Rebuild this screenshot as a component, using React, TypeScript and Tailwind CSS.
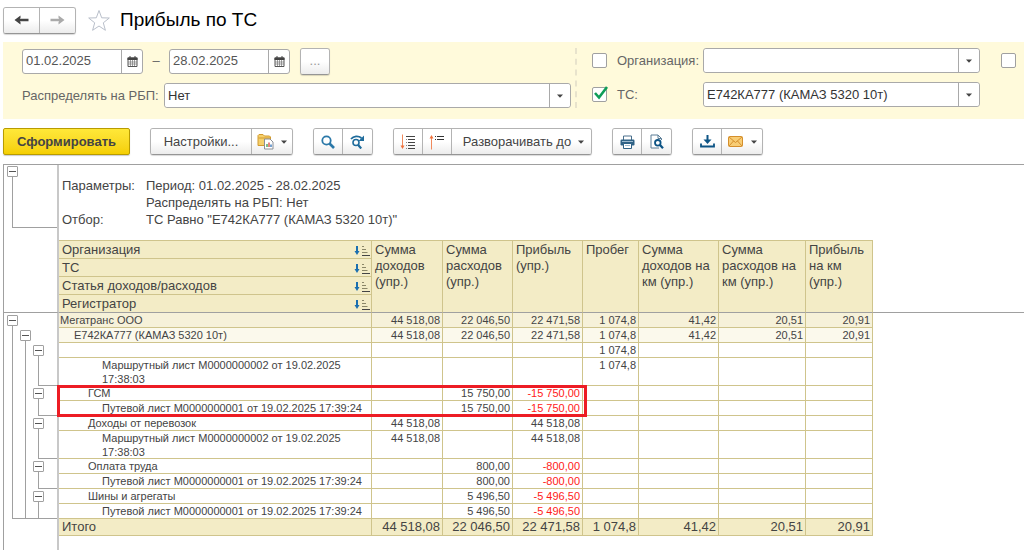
import React, { useState } from 'react';
import clsx from 'clsx';

type GutterMark = 'toggle' | 'line' | 'end' | null;

interface ReportRow {
  label: string;
  level: number;
  gutter: GutterMark[];
  values: string[];
  tall?: boolean;
  tone?: string;
  framed?: boolean;
}

const ROWS: ReportRow[] = [
  { label: 'Мегатранс ООО', level: 0, gutter: ['toggle', null, null], values: ['44 518,08', '22 046,50', '22 471,58', '1 074,8', '41,42', '20,51', '20,91'], tone: 'bg-[#f6f1d9]' },
  { label: 'Е742КА777 (КАМАЗ 5320 10т)', level: 1, gutter: ['line', 'toggle', null], values: ['44 518,08', '22 046,50', '22 471,58', '1 074,8', '41,42', '20,51', '20,91'], tone: 'bg-[#fbf9ec]' },
  { label: '', level: 2, gutter: ['line', 'line', 'toggle'], values: ['', '', '', '1 074,8', '', '', ''] },
  { label: 'Маршрутный лист М0000000002 от 19.02.2025 17:38:03', level: 3, gutter: ['line', 'line', 'end'], values: ['', '', '', '1 074,8', '', '', ''], tall: true },
  { label: 'ГСМ', level: 2, gutter: ['line', 'line', 'toggle'], values: ['', '15 750,00', '-15 750,00', '', '', '', ''], framed: true },
  { label: 'Путевой лист М0000000001 от 19.02.2025 17:39:24', level: 3, gutter: ['line', 'line', 'end'], values: ['', '15 750,00', '-15 750,00', '', '', '', ''] },
  { label: 'Доходы от перевозок', level: 2, gutter: ['line', 'line', 'toggle'], values: ['44 518,08', '', '44 518,08', '', '', '', ''] },
  { label: 'Маршрутный лист М0000000002 от 19.02.2025 17:38:03', level: 3, gutter: ['line', 'line', 'end'], values: ['44 518,08', '', '44 518,08', '', '', '', ''], tall: true },
  { label: 'Оплата труда', level: 2, gutter: ['line', 'line', 'toggle'], values: ['', '800,00', '-800,00', '', '', '', ''] },
  { label: 'Путевой лист М0000000001 от 19.02.2025 17:39:24', level: 3, gutter: ['line', 'line', 'end'], values: ['', '800,00', '-800,00', '', '', '', ''] },
  { label: 'Шины и агрегаты', level: 2, gutter: ['line', 'line', 'toggle'], values: ['', '5 496,50', '-5 496,50', '', '', '', ''] },
  { label: 'Путевой лист М0000000001 от 19.02.2025 17:39:24', level: 3, gutter: ['end', 'end', 'end'], values: ['', '5 496,50', '-5 496,50', '', '', '', ''] },
];

const TOTALS = ['44 518,08', '22 046,50', '22 471,58', '1 074,8', '41,42', '20,51', '20,91'];

const GROUPS = ['Организация', 'ТС', 'Статья доходов/расходов', 'Регистратор'];

const COLUMNS = [
  'Сумма доходов (упр.)',
  'Сумма расходов (упр.)',
  'Прибыль (упр.)',
  'Пробег',
  'Сумма доходов на км (упр.)',
  'Сумма расходов на км (упр.)',
  'Прибыль на км (упр.)',
];

const INDENTS = ['pl-px', 'pl-[15px]', 'pl-[29px]', 'pl-[43px]'];

const FIELD = 'flex h-[25px] items-stretch rounded-[3px] border border-[#a9a9a9] bg-white';
const BUTTON = 'flex items-center justify-center bg-linear-to-b from-white via-white to-[#ececec] text-[#444]';
const GROUP = 'flex h-[27px] shrink-0 items-stretch divide-x divide-[#b3b3b3] overflow-hidden rounded-[3px] border border-[#b3b3b3] border-b-[#959595] shadow-[0_1px_1px_rgba(0,0,0,0.15)]';

const Caret = () => (
  <svg width="6" height="4" viewBox="0 0 6 4" className="shrink-0">
    <path d="M0 0.500h6L3 3.700z" fill="#444" />
  </svg>
);

const CalendarIcon = () => (
  <svg width="11" height="11" viewBox="0 0 11 11">
    <path d="M1 2h9v8.5H1z" fill="#fff" stroke="#555" />
    <path d="M0.5 1.5h10v2.5H0.5z" fill="#444" />
    <path d="M3 0v2M8 0v2" stroke="#444" />
    <path d="M3.5 4v6M5.5 4v6M7.5 4v6M1 6h9M1 8h9" stroke="#777" strokeWidth="0.7" />
  </svg>
);

const Arrow = ({ flip, color }: { flip?: boolean; color: string }) => (
  <svg width="15" height="10" viewBox="0 0 15 10">
    <path d={flip ? 'M0.500 5h10' : 'M14.500 5H4'} stroke={color} strokeWidth="2.400" />
    <path d={flip ? 'M8.500 0.500L14.500 5l-6 4.500V7l1.500-2-1.500-2z' : 'M6.500 0.500L0.500 5l6 4.500V7L5 5l1.500-2z'} fill={color} />
  </svg>
);

const StarIcon = () => (
  <svg width="24" height="23" viewBox="0 0 24 23">
    <path
      d="M12 1.5l2.7 7.3 7.6.2-6 4.8 2.1 7.5L12 17l-6.4 4.3 2.1-7.5-6-4.8 7.6-.2z"
      fill="#fff"
      stroke="#b9bfca"
    />
  </svg>
);

const FolderReportIcon = () => (
  <svg width="18" height="17" viewBox="0 0 18 17">
    <path d="M1 12.5V2.5l1-1h4l1.5 1.5h5l1 1v8.5z" fill="#f5d06c" stroke="#d29a2e" />
    <path d="M1.5 5h12" stroke="#d29a2e" />
    <path d="M7.5 6h5.5l3 3v7H7.5z" fill="#fff" stroke="#8a8f96" />
    <path d="M10 14v-3" stroke="#3a9d48" strokeWidth="1.3" />
    <path d="M12 14v-4.5" stroke="#d8433a" strokeWidth="1.3" />
    <path d="M14 14v-2.5" stroke="#2c6fb5" strokeWidth="1.3" />
  </svg>
);

const SearchIcon = () => (
  <svg width="14" height="14" viewBox="0 0 14 14" fill="none" stroke="#2b78a8">
    <circle cx="5.5" cy="5.5" r="4.2" strokeWidth="1.8" />
    <path d="M8.5 8.5l4.500 4.500" strokeWidth="2.6" />
  </svg>
);

const SearchNextIcon = () => (
  <svg width="15" height="14" viewBox="0 0 15 14" fill="none" stroke="#1f6c9c">
    <path d="M1 4C3.5 0.800 8.500 0.600 11.500 3" strokeWidth="1.8" />
    <path d="M14 0.500v5.500H8.500z" fill="#1f6c9c" stroke="none" />
    <circle cx="6" cy="7.500" r="3" strokeWidth="1.600" />
    <path d="M8.200 10l3 3.500" strokeWidth="2.200" />
  </svg>
);

const ExpandIcon = () => (
  <svg width="16" height="16" viewBox="0 0 16 16">
    <path d="M2.5 0.5v12" stroke="#f08a5d" />
    <path d="M0.500 11.500h4L2.500 15z" fill="#f0703a" />
    <path d="M6 2.5h9M8 5.5h7M8 8.500h7M8 11.500h7M8 14.500h7" stroke="#444" />
    <path d="M6 5.500h1M6 8.500h1M6 11.500h1M6 14.500h1" stroke="#888" />
  </svg>
);

const CollapseIcon = () => (
  <svg width="16" height="16" viewBox="0 0 16 16">
    <path d="M2.5 3.5v12" stroke="#f08a5d" />
    <path d="M0.500 4.500h4L2.500 1z" fill="#f0703a" />
    <path d="M6 2.5h1M8 2.5h7M6 5.5h1M8 5.5h7" stroke="#333" />
  </svg>
);

const PrintIcon = () => (
  <svg width="15" height="14" viewBox="0 0 15 14">
    <path d="M3.5 5V1h8v4" fill="#fff" stroke="#4a6f8c" />
    <rect x="0.5" y="4.5" width="14" height="6" rx="1.2" fill="#2f6286" />
    <path d="M2 6.5h11" stroke="#9dbbd0" />
    <path d="M3.5 8.5h8v5h-8z" fill="#fff" stroke="#2f6286" />
    <path d="M5 10.5h5" stroke="#9dbbd0" />
  </svg>
);

const PreviewIcon = () => (
  <svg width="14" height="15" viewBox="0 0 14 15" fill="none">
    <path d="M9 14H1V1h7l3.5 3.5V6" fill="#fff" stroke="#5b7d96" />
    <path d="M8 1v3.5h3.5" stroke="#5b7d96" />
    <circle cx="7.8" cy="8.8" r="2.8" stroke="#0d5485" strokeWidth="1.8" />
    <path d="M9.8 10.8l3.2 3.4" stroke="#0d5485" strokeWidth="2.3" />
  </svg>
);

const SaveIcon = () => (
  <svg width="15" height="13" viewBox="0 0 15 13">
    <path d="M7.5 0v6" stroke="#0d5485" strokeWidth="2" />
    <path d="M3.5 4.5h8l-4 4.5z" fill="#0d5485" />
    <path d="M1 8.5v3h13v-3" fill="none" stroke="#0d5485" strokeWidth="1.8" />
  </svg>
);

const MailIcon = () => (
  <svg width="15" height="11" viewBox="0 0 15 11">
    <rect x="0.5" y="0.5" width="14" height="10" rx="1" fill="#f8cd75" stroke="#d58f2c" />
    <path d="M1 1l6.5 5.5L14 1M1 10l4.5-5M14 10L9.5 5" fill="none" stroke="#d58f2c" />
  </svg>
);

const SortIcon = () => (
  <svg width="16" height="12" viewBox="0 0 16 12" className="shrink-0">
    <path d="M3 2v6" stroke="#1a6fb0" strokeWidth="2" />
    <path d="M0.500 7h5L3 11z" fill="#1a6fb0" />
    <path d="M8 2.500h2M8 5.500h4M8 8.500h5.500" stroke="#8b8768" />
    <path d="M8 11.500h8" stroke="#444" />
  </svg>
);

const Toggle = () => {
  const [open, setOpen] = useState(true);
  return (
    <button
      type="button"
      aria-label="Свернуть группу"
      aria-expanded={open}
      onClick={() => setOpen(!open)}
      className="flex size-[11px] shrink-0 items-center justify-center rounded-[1px] border border-[#a0a0a0] bg-white"
    >
      <span className="h-px w-[7px] bg-[#555]" />
    </button>
  );
};

// Tree lines beside one row: a column per nesting level
const Gutter = ({ marks }: { marks: GutterMark[] }) => {
  const firstEnd = marks.indexOf('end');
  return (
    <div className="flex h-full pl-[2px]">
      {marks.map((mark, i) => (
        <div key={i} className="flex w-[13px] flex-col items-center">
          {mark === 'toggle' && (
            <>
              <span className="h-[2px]" />
              <Toggle />
              <span className="w-px flex-1 bg-[#a0a0a0]" />
            </>
          )}
          {(mark === 'line' || mark === 'end') && <span className="w-px flex-1 bg-[#a0a0a0]" />}
          {firstEnd >= 0 && i >= firstEnd && (
            <span className={clsx('h-px bg-[#a0a0a0]', i === firstEnd ? 'w-[7px] self-end' : 'w-full')} />
          )}
        </div>
      ))}
      {firstEnd >= 0 && <span className="h-px flex-1 self-end bg-[#a0a0a0]" />}
    </div>
  );
};

const DateField = ({ label, value }: { label: string; value: string }) => (
  <div className={clsx(FIELD, 'w-[121px]')}>
    <input type="text" aria-label={label} defaultValue={value} className="min-w-0 flex-1 rounded-[3px] pl-[3px] text-[#555] outline-none" />
    <button type="button" aria-label="Выбрать дату" className="flex w-[21px] items-center justify-center border-l border-[#a9a9a9]">
      <CalendarIcon />
    </button>
  </div>
);

const SelectField = ({ id, value, className }: { id: string; value: string; className: string }) => (
  <div className={clsx(FIELD, 'relative', className)}>
    <select id={id} defaultValue={value} className="w-full appearance-none rounded-[3px] bg-white pr-6 pl-[3px] text-[#333] outline-none">
      <option value={value}>{value}</option>
    </select>
    <span className="pointer-events-none absolute inset-y-0 right-0 flex w-[21px] items-center justify-center border-l border-[#a9a9a9]">
      <Caret />
    </span>
  </div>
);

const CheckBox = ({ id, label, checked }: { id: string; label?: string; checked?: boolean }) => (
  <span className="relative flex size-[15px] shrink-0">
    <input
      id={id}
      type="checkbox"
      aria-label={label}
      defaultChecked={checked}
      className="peer size-[15px] appearance-none rounded-[2px] border border-[#a0a0a0] bg-white"
    />
    <svg viewBox="0 0 15 15" className="pointer-events-none absolute inset-0 hidden overflow-visible peer-checked:block">
      <path d="M3 6l4 4.5L15 0" fill="none" stroke="#0f9d58" strokeWidth="2.6" />
    </svg>
  </span>
);

const NUM_CELL = 'border-r border-b border-[#cfc48c] pr-[2px] text-right align-top whitespace-nowrap';

export default function App() {
  return (
    <div className="flex min-h-screen flex-col bg-white pl-[3px] font-['Liberation_Sans',Arial,sans-serif] text-[13px] text-[#444]">
      <header className="flex h-[42px] items-center pb-[2px]">
        <div className={clsx(GROUP, 'h-[25px] w-[73px]')}>
          <button type="button" aria-label="Назад" className={clsx(BUTTON, 'flex-1')}>
            <Arrow color="#444" />
          </button>
          <button type="button" aria-label="Вперед" className={clsx(BUTTON, 'flex-1')}>
            <Arrow flip color="#aaa" />
          </button>
        </div>
        <button type="button" aria-label="В избранное" className="ml-[11px]">
          <StarIcon />
        </button>
        <h1 className="ml-[9px] text-[19px] text-black">Прибыль по ТС</h1>
      </header>

      <section className="flex bg-[#fffadb] pt-[6px] pb-[11px] text-[#666]">
        <div className="flex min-w-0 flex-1 flex-col gap-[9px] pr-1 pl-[19px]">
          <div className="flex h-[26px] items-center">
            <DateField label="Начало периода" value="01.02.2025" />
            <span className="w-[26px] text-center">–</span>
            <DateField label="Конец периода" value="28.02.2025" />
            <div className={clsx(GROUP, 'ml-[10px] h-[26px] w-[30px]')}>
              <button type="button" className={clsx(BUTTON, 'flex-1 text-[#999]')}>...</button>
            </div>
          </div>
          <div className="flex items-center">
            <label htmlFor="spread" className="w-[142px] shrink-0 whitespace-nowrap">Распределять на РБП:</label>
            <SelectField id="spread" value="Нет" className="flex-1" />
          </div>
        </div>
        <div className="flex shrink-0 border-l-2 border-dashed border-[#e8e3cc] pr-2 pl-[15px]">
          <div className="flex flex-col gap-[9px]">
            <div className="flex h-[25px] items-center">
              <CheckBox id="use-org" label="Использовать отбор по организации" />
              <label htmlFor="org" className="ml-[10px] w-[86px]">Организация:</label>
              <SelectField id="org" value="" className="w-[277px]" />
            </div>
            <div className="flex h-[25px] items-center">
              <CheckBox id="use-ts" label="Использовать отбор по ТС" checked />
              <label htmlFor="ts" className="ml-[10px] w-[86px]">ТС:</label>
              <SelectField id="ts" value="Е742КА777 (КАМАЗ 5320 10т)" className="w-[277px]" />
            </div>
          </div>
          <div className="ml-[21px] flex h-[25px] items-center">
            <CheckBox id="use-more" label="Дополнительный отбор" />
          </div>
        </div>
      </section>

      <div className="flex gap-5 py-[9px]">
        <button
          type="button"
          className="h-[27px] w-[127px] rounded-[2px] border border-[#b89b00] bg-linear-to-b from-[#ffe838] to-[#f5cf00] font-bold text-[#444] shadow-[0_1px_1px_rgba(0,0,0,0.2)]"
        >
          Сформировать
        </button>
        <div className={GROUP}>
          <button type="button" className={clsx(BUTTON, 'w-[101px]')}>Настройки...</button>
          <button type="button" aria-label="Варианты отчета" className={clsx(BUTTON, 'w-10 gap-[6px]')}>
            <FolderReportIcon />
            <Caret />
          </button>
        </div>
        <div className={GROUP}>
          <button type="button" aria-label="Найти" className={clsx(BUTTON, 'w-[29px]')}><SearchIcon /></button>
          <button type="button" aria-label="Найти далее" className={clsx(BUTTON, 'w-[29px]')}><SearchNextIcon /></button>
        </div>
        <div className={GROUP}>
          <button type="button" aria-label="Развернуть группы" className={clsx(BUTTON, 'w-[29px]')}><ExpandIcon /></button>
          <button type="button" aria-label="Свернуть группы" className={clsx(BUTTON, 'w-[29px]')}><CollapseIcon /></button>
          <button type="button" className={clsx(BUTTON, 'w-[139px] gap-[7px] pl-1')}>
            Разворачивать до
            <Caret />
          </button>
        </div>
        <div className={GROUP}>
          <button type="button" aria-label="Печать" className={clsx(BUTTON, 'w-[29px]')}><PrintIcon /></button>
          <button type="button" aria-label="Предварительный просмотр" className={clsx(BUTTON, 'w-[29px]')}><PreviewIcon /></button>
        </div>
        <div className={GROUP}>
          <button type="button" aria-label="Сохранить" className={clsx(BUTTON, 'w-[29px]')}><SaveIcon /></button>
          <button type="button" aria-label="Отправить по почте" className={clsx(BUTTON, 'w-10 gap-2')}>
            <MailIcon />
            <Caret />
          </button>
        </div>
      </div>

      <main className="flex flex-1 flex-col border-t border-l border-[#a0a0a0]">
        <div className="flex">
          <div className="flex w-[55px] shrink-0 flex-col border-r-2 border-[#c8c8c8] pt-px pb-3 pl-[2px]">
            <div className="flex flex-1">
              <div className="flex w-[13px] flex-col items-center">
                <Toggle />
                <span className="w-px flex-1 bg-[#a0a0a0]" />
                <span className="h-px w-[7px] self-end bg-[#a0a0a0]" />
              </div>
              <span className="h-px flex-1 self-end bg-[#a0a0a0]" />
            </div>
          </div>
          <dl className="grid grid-cols-[84px_auto] py-3 pl-[3px] leading-[17px]">
            <dt>Параметры:</dt>
            <dd>Период: 01.02.2025 - 28.02.2025</dd>
            <dd className="col-start-2">Распределять на РБП: Нет</dd>
            <dt>Отбор:</dt>
            <dd>ТС Равно "Е742КА777 (КАМАЗ 5320 10т)"</dd>
          </dl>
        </div>

        <table className="w-full table-fixed border-separate border-spacing-0">
          <colgroup>
            <col className="w-[55px]" />
            <col className="w-[313px]" />
            <col className="w-[71px]" />
            <col className="w-[70px]" />
            <col className="w-[70px]" />
            <col className="w-[56px]" />
            <col className="w-[80px]" />
            <col className="w-[87px]" />
            <col className="w-[67px]" />
            <col />
          </colgroup>
          <thead>
            {GROUPS.map((group, i) => (
              <tr key={group} className={i === 0 ? 'h-[19px]' : 'h-[18px]'}>
                {i === 0 && <td rowSpan={4} className="border-r-2 border-b border-r-[#c8c8c8] border-b-[#a0a0a0]" />}
                <th
                  scope="col"
                  className={clsx(
                    'border-r border-b border-r-[#cfc48c] bg-[#f3ecc6] p-0 pl-[3px] text-left font-normal',
                    i === 0 && 'border-t border-t-[#cfc48c]',
                    i === 3 ? 'border-b-[#a0a0a0]' : 'border-b-[#cfc48c]',
                  )}
                >
                  <div className="flex items-center justify-between pr-px leading-[17px]">
                    {group}
                    <SortIcon />
                  </div>
                </th>
                {i === 0 &&
                  COLUMNS.map((column) => (
                    <th
                      key={column}
                      scope="col"
                      rowSpan={4}
                      className="border-t border-r border-b border-[#cfc48c] border-b-[#a0a0a0] bg-[#f3ecc6] p-0 pt-px pl-[3px] text-left align-top leading-[16px] font-normal"
                    >
                      {column}
                    </th>
                  ))}
                {i === 0 && <td rowSpan={4} className="border-b border-[#a0a0a0]" />}
              </tr>
            ))}
          </thead>
          <tbody className="text-[11px] leading-[14px]">
            {ROWS.map((row, i) => (
              <tr key={i} className={clsx(row.tall ? 'h-[28px]' : 'h-[15px]')}>
                <td className={clsx('border-r-2 border-[#c8c8c8] p-0', row.tall ? 'h-[28px]' : 'h-[15px]')}>
                  <Gutter marks={row.gutter} />
                </td>
                <td className={clsx('relative border-r border-b border-[#cfc48c] p-0 align-top', row.tone)}>
                  <div className={clsx('pr-5', INDENTS[row.level], row.tall ? 'h-[27px]' : 'h-[14px] whitespace-nowrap')}>
                    {row.label}
                  </div>
                  {row.framed && (
                    <div className="pointer-events-none absolute -top-px -left-[2px] z-10 h-8 w-[530px] border-3 border-[#ed1c24]" />
                  )}
                </td>
                {row.values.map((value, j) => (
                  <td key={j} className={clsx(NUM_CELL, 'py-0 pl-0', row.tone, value.startsWith('-') && 'text-[#ff1a1a]')}>
                    {value}
                  </td>
                ))}
                <td />
              </tr>
            ))}
          </tbody>
          <tfoot>
            <tr className="h-[17px] leading-[16px]">
              <td className="border-r-2 border-[#c8c8c8]" />
              <th scope="row" className="border-r border-b border-[#cfc48c] bg-[#f3ecc6] p-0 pl-[3px] text-left font-normal">Итого</th>
              {TOTALS.map((value, j) => (
                <td key={j} className={clsx(NUM_CELL, 'bg-[#f3ecc6] py-0 pl-0')}>{value}</td>
              ))}
              <td />
            </tr>
          </tfoot>
        </table>
        <div className="w-[55px] flex-1 border-r-2 border-[#c8c8c8]" />
      </main>
    </div>
  );
}
